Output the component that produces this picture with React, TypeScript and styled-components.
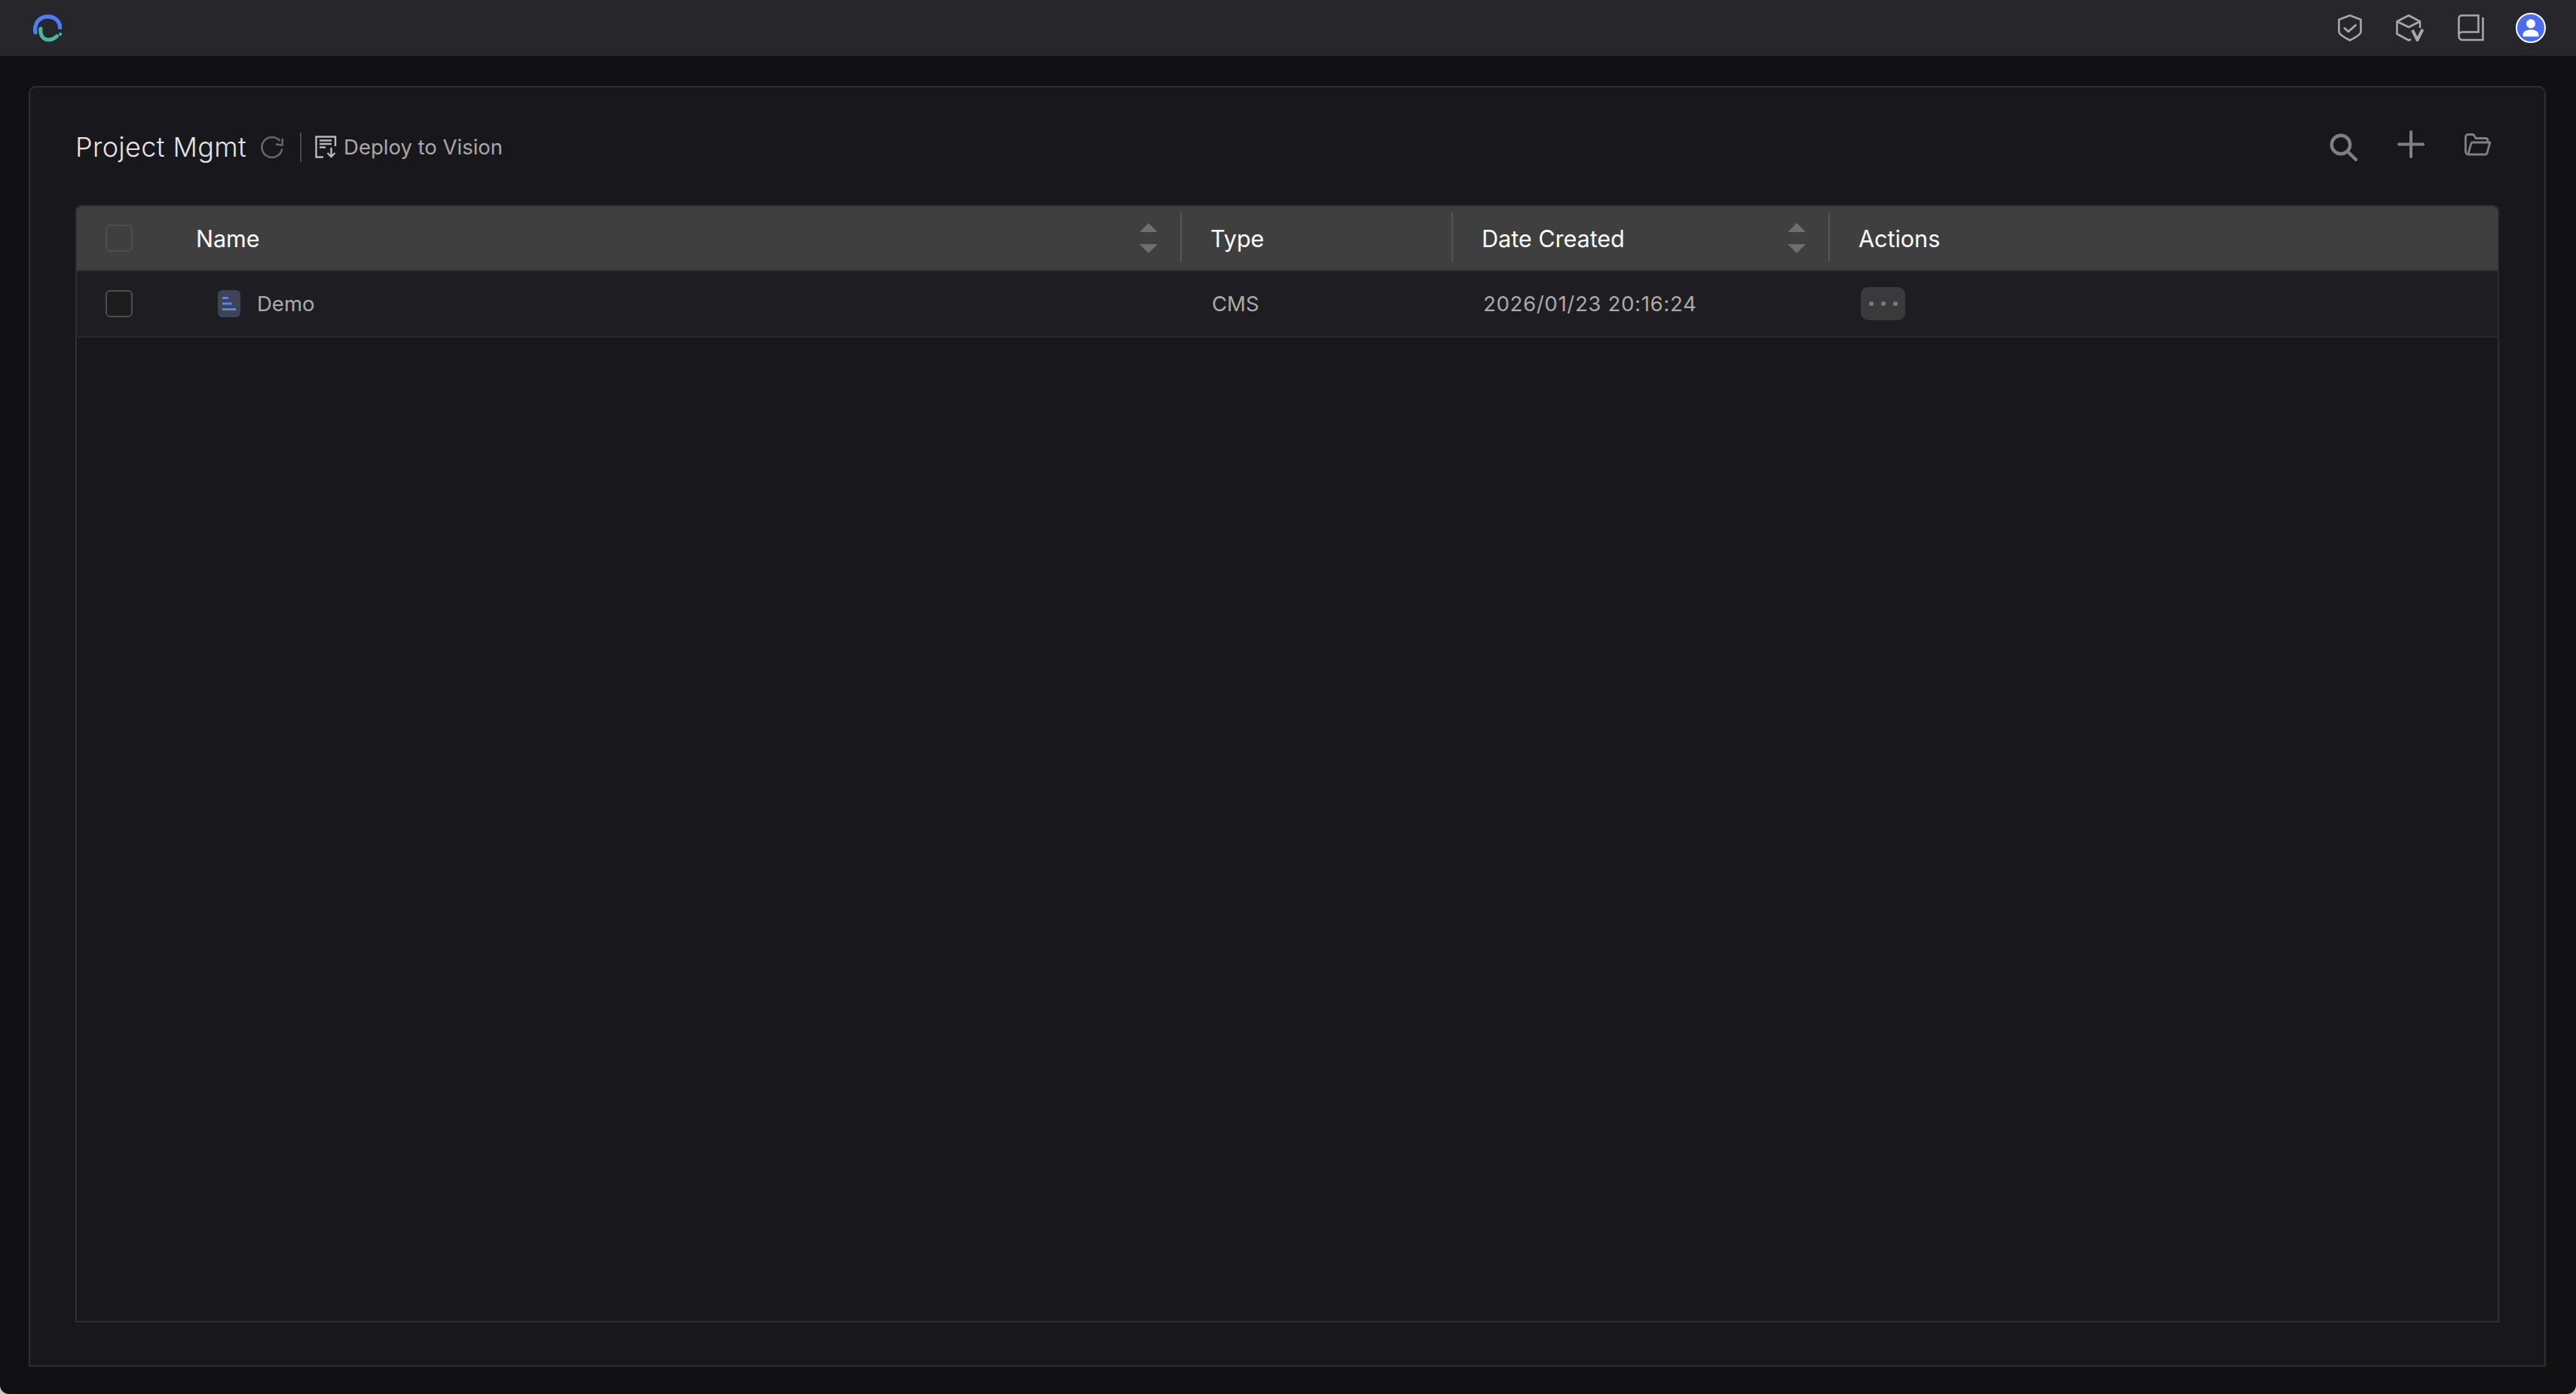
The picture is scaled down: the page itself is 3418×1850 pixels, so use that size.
import styled, { createGlobalStyle } from 'styled-components';

const GlobalStyle = createGlobalStyle`
  html, body {
    margin: 0;
    padding: 0;
    background: #c8c8c8;
  }
  * {
    box-sizing: border-box;
  }
`;

const Screen = styled.div`
  width: 100%;
  height: 100vh;
  display: flex;
  flex-direction: column;
  overflow: hidden;
  background: #111114;
  border-radius: 0 0 12px 12px;
  font-family: Inter, 'Liberation Sans', sans-serif;
`;

const TopBar = styled.header`
  flex: none;
  height: 74px;
  display: flex;
  align-items: center;
  justify-content: space-between;
  padding: 0 40px 0 44px;
  background: #26262b;
`;

const TopIcons = styled.div`
  display: flex;
  align-items: center;
  gap: 44px;
`;

const Main = styled.main`
  flex: 1;
  min-height: 0;
  display: flex;
  padding: 40px 40px 36px 38px;
`;

const Panel = styled.section`
  flex: 1;
  min-width: 0;
  display: flex;
  flex-direction: column;
  padding: 0 60px 57px;
  background: #18181c;
  border: 2px solid #2e2e30;
  border-radius: 10px 10px 0 0;
`;

const PanelHead = styled.div`
  flex: none;
  height: 156px;
  display: flex;
  align-items: center;
  justify-content: space-between;
  padding: 0 10px 0 0;
`;

const TitleRow = styled.div`
  display: flex;
  align-items: center;
  margin-top: 2px;
`;

const Title = styled.h1`
  margin: 0;
  font-size: 36px;
  font-weight: 300;
  line-height: 44px;
  letter-spacing: 0.35px;
  color: #e4e4e4;
`;

const RefreshIcon = styled.svg`
  margin-left: 19px;
`;

const Divider = styled.span`
  width: 2px;
  height: 39px;
  margin: 0 18px 0 22px;
  background: #4a4a4c;
`;

const DeployLink = styled.a`
  display: flex;
  align-items: center;
  gap: 9px;
  font-size: 27.5px;
  color: #a8a8a8;
`;

const Tools = styled.div`
  display: flex;
  align-items: center;
  gap: 53px;
  margin-top: 3px;
`;

const Table = styled.div`
  flex: 1;
  min-height: 0;
  border: 2px solid #2e2e30;
  border-radius: 8px 8px 0 0;
  overflow: hidden;
`;

const Row = styled.div`
  display: grid;
  grid-template-columns: 128px 1336px 360px 500px 1fr;
  align-items: stretch;
`;

const HeadRow = styled(Row)`
  height: 86px;
  background: #3f3f3f;
  border-bottom: 2px solid #333335;
  color: #fff;
  font-size: 30.5px;
`;

const BodyRow = styled(Row)`
  height: 88px;
  background: #1e1e22;
  border-bottom: 2px solid #29292c;
  color: #ababab;
  font-size: 27.5px;
`;

const Cell = styled.div<{ $pad?: number; $sep?: boolean }>`
  position: relative;
  display: flex;
  align-items: center;
  padding-left: ${(p) => p.$pad ?? 40}px;

  ${(p) =>
    p.$sep &&
    `&::before {
      content: '';
      position: absolute;
      left: 0;
      top: 8px;
      bottom: 10px;
      width: 2px;
      background: #555;
    }`}
`;

const DateText = styled.span`
  letter-spacing: 0.7px;
`;

const Check = styled.span<{ $fill?: boolean }>`
  width: 36px;
  height: 36px;
  border: 2px solid #4d4d4f;
  border-radius: 6px;
  background: ${(p) => (p.$fill ? '#1c1c1c' : 'transparent')};
`;

const Sorter = styled.span`
  margin-left: auto;
  margin-right: 30px;
  display: flex;
  flex-direction: column;
  gap: 16px;
`;

const Arrow = styled.i<{ $down?: boolean }>`
  display: block;
  width: 0;
  height: 0;
  border-left: 12px solid transparent;
  border-right: 12px solid transparent;
  ${(p) => (p.$down ? 'border-top' : 'border-bottom')}: 12px solid #6e6e6e;
`;

const DocName = styled.span`
  display: flex;
  align-items: center;
  gap: 22px;
`;

const MoreButton = styled.button`
  width: 59px;
  height: 44px;
  padding: 0;
  display: flex;
  align-items: center;
  justify-content: center;
  gap: 10px;
  background: #3a3a3d;
  border: none;
  border-radius: 10px;
`;

const Dot = styled.i`
  width: 6px;
  height: 6px;
  border-radius: 50%;
  background: #7a7a7a;
`;

const AvatarSvg = styled.svg`
  margin-left: -2px;
`;

const Logo = () => (
  <svg width="39" height="37" viewBox="0 0 39 37" fill="none">
    <path d="M3 24C1 11 9 3 19.5 3C29.5 3 35.5 10 35.5 17.5" stroke="#4d7cf6" strokeWidth="5.4" strokeLinecap="round" />
    <path d="M10 19C9 28 13.5 33.8 20 33.8C25 33.8 28.5 32 31.5 29" stroke="#47b8a0" strokeWidth="5" strokeLinecap="round" />
    <circle cx="36" cy="26.5" r="2.2" fill="#45a8c0" />
  </svg>
);

const ShieldIcon = () => (
  <svg width="33" height="36" viewBox="0 0 33 36" fill="none" stroke="#a8a8a8" strokeWidth="2.6" strokeLinejoin="round" strokeLinecap="round">
    <path d="M16 1.5L30.5 7V23C30.5 27 22 31.5 16 34.5C10 31.5 1.5 27 1.5 23V7Z" />
    <path d="M9 18.5L14 23L23.5 14.5" strokeWidth="3" />
  </svg>
);

const CubeIcon = () => (
  <svg width="38" height="36" viewBox="0 0 38 36" fill="none" stroke="#a8a8a8" strokeWidth="2.6" strokeLinejoin="round">
    <path d="M32 18V9.5L17 1.5L1.5 9.5V26L17 34.5L20 33" />
    <path d="M1.5 9.5L17 17L32 9.5" />
    <path d="M22 21L28.5 34L35.5 20" strokeWidth="4" strokeLinejoin="miter" />
  </svg>
);

const BookIcon = () => (
  <svg width="35" height="36" viewBox="0 0 35 36" fill="none" stroke="#a8a8a8" strokeWidth="2.6">
    <path d="M5.5 1.5H27.5V23.5H6C3.5 23.5 1.5 25.5 1.5 28V5.5C1.5 3 3 1.5 5.5 1.5Z" />
    <path d="M1.5 28C1.5 32 3.5 34 6 34H33.5V4" />
  </svg>
);

const AvatarIcon = () => (
  <AvatarSvg width="40" height="40" viewBox="0 0 40 40">
    <circle cx="20" cy="20" r="19" fill="#4a6cf0" stroke="#fff" strokeWidth="2" />
    <circle cx="20" cy="14.5" r="6" fill="#fff" />
    <path d="M9.5 30C9.5 24.5 14 22.5 20 22.5C26 22.5 30.5 24.5 30.5 30C30.5 31 30 31.5 29 31.5H11C10 31.5 9.5 31 9.5 30Z" fill="#fff" />
  </AvatarSvg>
);

const DeployIcon = () => (
  <svg width="29" height="30" viewBox="0 0 29 30" fill="none" stroke="#b8b8b8" strokeWidth="2.4">
    <path d="M11 28.5H1.5V1.5H27V14" />
    <path d="M6 6.5H22M6 11H22M6 15.5H14" />
    <path d="M21.5 16V28M16.5 23L21.5 28L26.5 23" />
  </svg>
);

const SearchIcon = () => (
  <svg width="37" height="37" viewBox="0 0 37 37" fill="none" stroke="#808080" strokeWidth="4.4" strokeLinecap="round">
    <circle cx="15" cy="15" r="12.2" />
    <path d="M24.5 24.5L34.8 34.8" />
  </svg>
);

// the plus and the folder sit higher than the search glass, so their boxes are taller than the drawing
const PlusIcon = () => (
  <svg width="36" height="45" viewBox="0 0 36 45" fill="none" stroke="#808080" strokeWidth="4" strokeLinecap="round">
    <path d="M18 2V35M2 18.5H34" />
  </svg>
);

const FolderIcon = () => (
  <svg width="36" height="37" viewBox="0 0 36 37" fill="none" stroke="#808080" strokeWidth="2.8" strokeLinejoin="round">
    <path d="M6 28C3 28 1.5 26.5 1.5 24V5C1.5 3 3 1.5 5 1.5H11C12.5 1.5 13.5 4 15 6.5H28C30 6.5 31 7.5 31 10V12" />
    <path d="M6 28H27.5C28.8 28 29.6 27.3 30 26L34 12H11C9.8 12 9 12.6 8.7 13.8L5 27" />
  </svg>
);

const DocIcon = () => (
  <svg width="30" height="36" viewBox="0 0 30 36">
    <rect width="30" height="36" rx="6" fill="#3d4456" />
    <rect x="6" y="9" width="8" height="3" fill="#5f80f5" />
    <rect x="6" y="16.5" width="12.5" height="3" fill="#5f80f5" />
    <rect x="6" y="24" width="18" height="3" fill="#5f80f5" />
  </svg>
);

const SortArrows = () => (
  <Sorter>
    <Arrow />
    <Arrow $down />
  </Sorter>
);

export default function App() {
  return (
    <>
      <GlobalStyle />
      <Screen>
        <TopBar>
          <Logo />
          <TopIcons>
            <ShieldIcon />
            <CubeIcon />
            <BookIcon />
            <AvatarIcon />
          </TopIcons>
        </TopBar>
        <Main>
          <Panel>
            <PanelHead>
              <TitleRow>
                <Title>Project Mgmt</Title>
                <RefreshIcon width="30" height="30" viewBox="0 0 30 30" fill="none" stroke="#666" strokeWidth="2.6">
                  <path d="M28.3 17.5A13.5 13.5 0 1 1 25.5 7" />
                  <path d="M29 3.5L28.5 12.5L20 11.5" />
                </RefreshIcon>
                <Divider />
                <DeployLink>
                  <DeployIcon />
                  Deploy to Vision
                </DeployLink>
              </TitleRow>
              <Tools>
                <SearchIcon />
                <PlusIcon />
                <FolderIcon />
              </Tools>
            </PanelHead>
            <Table>
              <HeadRow>
                <Cell $pad={38}>
                  <Check />
                </Cell>
                <Cell $pad={30}>
                  Name
                  <SortArrows />
                </Cell>
                <Cell $sep>Type</Cell>
                <Cell $sep>
                  Date Created
                  <SortArrows />
                </Cell>
                <Cell $sep>Actions</Cell>
              </HeadRow>
              <BodyRow>
                <Cell $pad={38}>
                  <Check $fill />
                </Cell>
                <Cell $pad={59}>
                  <DocName>
                    <DocIcon />
                    Demo
                  </DocName>
                </Cell>
                <Cell $pad={42}>CMS</Cell>
                <Cell $pad={42}>
                  <DateText>2026/01/23 20:16:24</DateText>
                </Cell>
                <Cell $pad={43}>
                  <MoreButton aria-label="More">
                    <Dot />
                    <Dot />
                    <Dot />
                  </MoreButton>
                </Cell>
              </BodyRow>
            </Table>
          </Panel>
        </Main>
      </Screen>
    </>
  );
}
